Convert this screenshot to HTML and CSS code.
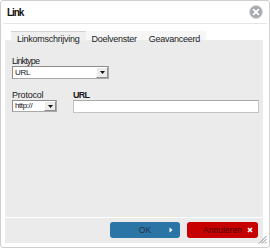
FILE: index.html
```html
<!DOCTYPE html>
<html lang="nl">
<head>
    <meta charset="UTF-8">
    <meta name="viewport" content="width=device-width, initial-scale=1.0">
    <title>Link</title>
    <link rel="stylesheet" href="styles.css">
</head>
<body>
  <div class="dialog">
    <div class="dialog-head">
        <span class="dialog-title">Link</span>
        <span class="dialog-close">
            <svg width="14" height="14" viewBox="0 0 14 14">
                <circle cx="7" cy="7" r="6.5" fill="#a3abb3" stroke="#d6dade" stroke-width="1"/>
                <path d="M4.6 4.6 L9.4 9.4 M9.4 4.6 L4.6 9.4" stroke="#fff" stroke-width="1.8" stroke-linecap="round"/>
            </svg>
        </span>
    </div>

    <div class="dialog-body">
        <div class="tabs">
            <span class="tab tab-active">Linkomschrijving</span>
            <span class="tab">Doelvenster</span>
            <span class="tab">Geavanceerd</span>
        </div>
        <div class="panel">
            <div class="field">
                <label class="field-label label-tight">Linktype</label>
                <div class="select select-type">
                    <span class="select-value">URL</span>
                    <span class="select-btn"><svg width="5" height="3" viewBox="0 0 5 3"><path d="M0 0 H5 L2.5 3 Z" fill="#111"/></svg></span>
                </div>
            </div>
            <div class="field-row">
                <div class="field">
                    <label class="field-label">Protocol</label>
                    <div class="select select-proto">
                        <span class="select-value">http://</span>
                        <span class="select-btn"><svg width="5" height="3" viewBox="0 0 5 3"><path d="M0 0 H5 L2.5 3 Z" fill="#111"/></svg></span>
                    </div>
                </div>
                <div class="field field-grow">
                    <label class="field-label field-label-bold">URL</label>
                    <input class="text-input" type="text">
                </div>
            </div>
        </div>
        <div class="dialog-foot">
            <button class="btn btn-ok">
                <span></span>
                <span class="btn-text">OK</span>
                <svg class="btn-icon" width="4" height="6" viewBox="0 0 4 6"><path d="M0.5 0.5 L3.5 3 L0.5 5.5 Z" fill="#fff"/></svg>
            </button>
            <button class="btn btn-cancel">
                <span></span>
                <span class="btn-text">Annuleren</span>
                <svg class="btn-icon" width="6" height="6" viewBox="0 0 6 6"><path d="M1 1 L5 5 M5 1 L1 5" stroke="#fff" stroke-width="1.6"/></svg>
            </button>
        </div>
    </div>

    <svg class="resize-grip" width="9" height="9" viewBox="0 0 9 9">
        <path d="M8.5 1 L1 8.5 M8.5 4 L4 8.5 M8.5 7 L7 8.5" stroke="#8a8a8a" stroke-width="1"/>
    </svg>
  </div>
</body>
</html>
```

FILE: styles.css
```css
* {
    margin: 0;
    padding: 0;
    box-sizing: border-box;
}

body {
    font-family: "Liberation Sans", Arial, sans-serif;
    background-color: #fff;
    color: #222;
}

/* Dialog frame */
.dialog {
    position: relative;
    width: 270px;
    height: 248px;
    background: #fff;
    border: 1px solid #cfcfcf;
    border-radius: 3px;
}

.dialog-head {
    height: 23px;
    margin: 0 2px;
    padding: 0 4px 1px 4px;
    display: flex;
    align-items: center;
    justify-content: space-between;
    border-bottom: 1px solid #e6e6e6;
}

.dialog-title {
    font-size: 10px;
    font-weight: bold;
    letter-spacing: -1.1px;
    color: #111;
    padding-top: 2px;
}

.dialog-close {
    display: flex;
    margin-top: 1px;
}

.dialog-body {
    padding: 7px 6px 4px 4px;
}

/* Tabs */
.tabs {
    display: flex;
    height: 15px;
    padding-left: 6px;
    background: linear-gradient(#fff 9px, #ebebeb 9px);
}

.tab {
    font-size: 9px;
    letter-spacing: -0.25px;
    line-height: 15px;
    padding: 1px 6px 0 6px;
    color: #222;
    background: linear-gradient(#f6f6f6 9px, #ebebeb 9px);
}

.tab-active {
    background: linear-gradient(#efefef 9px, #ebebeb 9px);
    border-top: 1px solid #d2d2d2;
    padding-top: 0;
}

/* Panel */
.panel {
    height: 171px;
    background: #ebebeb;
    padding: 10px 4px 0 7px;
}

.field {
    display: flex;
    flex-direction: column;
}

.field-row {
    display: flex;
    gap: 16px;
    margin-top: 11px;
}

.field-grow {
    flex: 1;
}

.field-label {
    font-size: 9px;
    line-height: 10px;
    height: 10px;
    letter-spacing: -0.2px;
    color: #1a1a1a;
}

.label-tight {
    letter-spacing: -0.8px;
}

.field-label-bold {
    font-weight: bold;
    letter-spacing: -0.7px;
}

.select {
    display: flex;
    align-items: stretch;
    background: #fff;
    border: 1px solid #a8a8a8;
    border-top-color: #8c8c8c;
    border-left-color: #8c8c8c;
}

.select-type {
    width: 97px;
    height: 13px;
}

.select-proto {
    width: 45px;
    height: 12px;
}

.select-value {
    flex: 1;
    font-size: 8px;
    letter-spacing: -0.3px;
    line-height: 11px;
    padding-left: 2px;
    color: #111;
}

.select-proto .select-value {
    line-height: 10px;
    letter-spacing: -0.4px;
}

.select-btn {
    width: 12px;
    display: flex;
    align-items: center;
    justify-content: center;
    background: #ececec;
    border: 1px solid;
    border-color: #fff #8e8e8e #8e8e8e #fff;
}

.text-input {
    height: 13px;
    width: 100%;
    background: #fff;
    border: 1px solid #c4c4c4;
    border-top-color: #a9a9a9;
    outline: none;
}

/* Footer */
.dialog-foot {
    margin-top: 1px;
    height: 25px;
    background: #ebebeb;
    display: flex;
    justify-content: flex-end;
    align-items: flex-start;
    gap: 7px;
    padding: 4px 5px 0 0;
}

.btn {
    display: grid;
    grid-template-columns: 11px 1fr 11px;
    align-items: center;
    width: 71px;
    height: 16px;
    border: none;
    border-radius: 3px;
    font-family: "Liberation Sans", Arial, sans-serif;
    font-size: 8.5px;
    cursor: pointer;
}

.btn-text {
    text-align: center;
}

.btn-icon {
    justify-self: start;
}

.btn-ok {
    width: 70px;
    background: #2b74a6;
    color: #1d3448;
}

.btn-cancel {
    background: #c70000;
    color: #4a0000;
}

.resize-grip {
    position: absolute;
    right: 2px;
    bottom: 3px;
}
```
